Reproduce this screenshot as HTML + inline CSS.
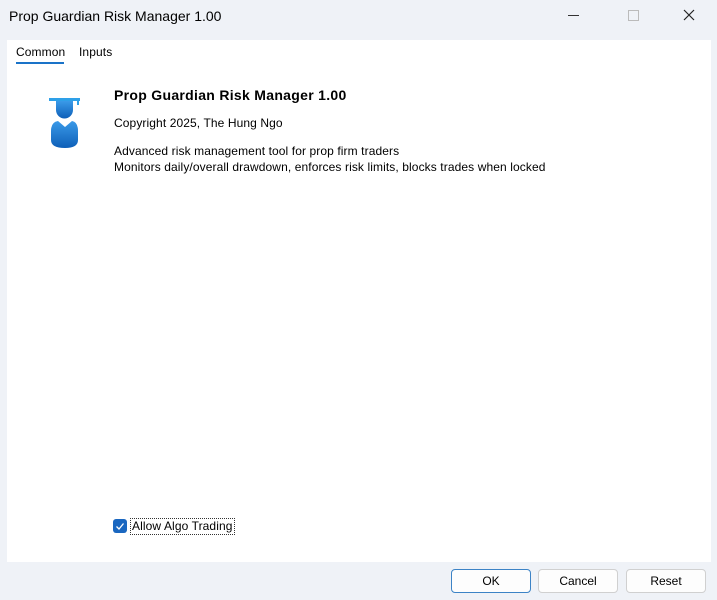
<!DOCTYPE html><html><head><style>
body{margin:0;width:717px;height:600px;background:#eff2f7;font-family:"Liberation Sans",sans-serif;position:relative;overflow:hidden;color:#000}
.a{position:absolute}
.t{font-size:12px;letter-spacing:0.1px}
.btn{position:absolute;top:569px;width:78px;height:22px;background:#fdfdfd;border:1px solid #d0d0d0;border-radius:4px;font-size:12px;text-align:center;line-height:23px}
</style></head><body>
<div class="a" style="left:9px;top:8px;font-size:14px">Prop Guardian Risk Manager 1.00</div>
<div class="a" style="left:568px;top:15px;width:11px;height:1px;background:#333"></div>
<div class="a" style="left:628px;top:10px;width:9px;height:9px;border:1px solid #bbb"></div>
<svg class="a" style="left:683px;top:9px" width="12" height="12"><path d="M1 1L11 11M11 1L1 11" stroke="#222" stroke-width="1.2"/></svg>
<div class="a" style="left:7px;top:40px;width:704px;height:522px;background:#fff"></div>
<div class="a t" style="left:16px;top:45px">Common</div>
<div class="a" style="left:16px;top:62px;width:48px;height:2px;background:#1a73c8"></div>
<div class="a t" style="left:79px;top:45px">Inputs</div>
<svg class="a" style="left:48px;top:96px" width="34" height="54">
<defs><linearGradient id="g" x1="0" y1="0" x2="0" y2="1"><stop offset="0" stop-color="#3a9ae8"/><stop offset="1" stop-color="#0e5fb8"/></linearGradient></defs>
<rect x="1" y="2" width="31" height="3" fill="#2ea0e8"/><rect x="29" y="4" width="2" height="5" fill="#2ea0e8"/>
<path d="M8 5H25V14A8.5 8.5 0 0 1 8 14Z" fill="url(#g)"/>
<path d="M3 35Q3 26 10 25L17 31L24 25Q30 26 30 35V44Q30 52 17 52Q3 52 3 44Z" fill="url(#g)"/>
</svg>
<div class="a" style="left:114px;top:87px;font-size:14px;font-weight:bold;letter-spacing:0.3px">Prop Guardian Risk Manager 1.00</div>
<div class="a t" style="left:114px;top:116px">Copyright 2025, The Hung Ngo</div>
<div class="a t" style="left:114px;top:143px;line-height:16px">Advanced risk management tool for prop firm traders<br>Monitors daily/overall drawdown, enforces risk limits, blocks trades when locked</div>
<div class="a" style="left:113px;top:519px;width:14px;height:14px;background:#1a67c0;border-radius:3px"></div>
<svg class="a" style="left:113px;top:519px" width="14" height="14"><path d="M3.5 7.5L6 10L10.5 4.5" stroke="#fff" stroke-width="1.3" fill="none"/></svg>
<div class="a t" style="left:130px;top:518px;border:1px dotted #333;padding:0 1px;line-height:15px">Allow Algo Trading</div>
<div class="btn" style="left:451px;border-color:#3c83c6">OK</div>
<div class="btn" style="left:538px">Cancel</div>
<div class="btn" style="left:626px">Reset</div>
</body></html>
